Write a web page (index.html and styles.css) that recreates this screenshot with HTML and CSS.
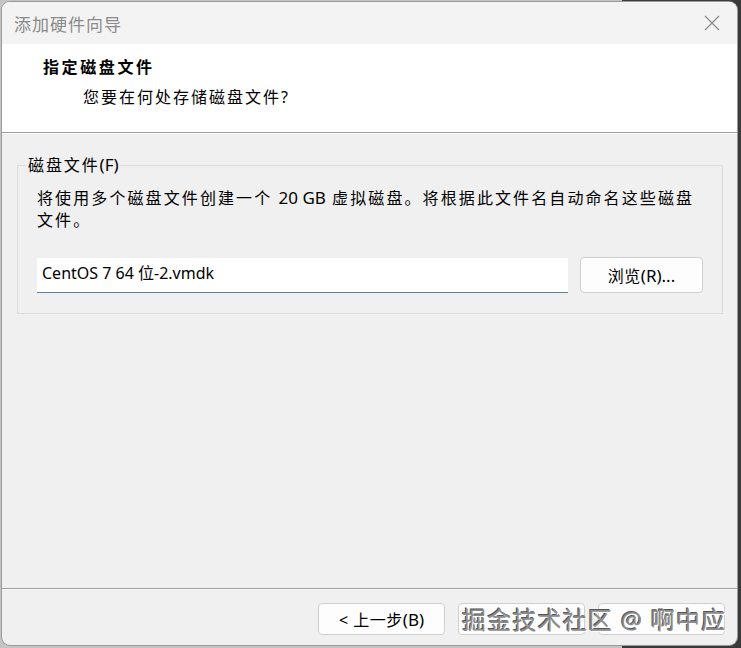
FILE: index.html
```html
<!DOCTYPE html>
<html lang="zh-CN">
<head>
	<meta charset="UTF-8">
	<title>添加硬件向导</title>
	<link rel="stylesheet" href="styles.css">
</head>
<body>
	<div class="dlg">
		<div class="titlebar">
			<span class="title">添加硬件向导</span>
			<svg class="close" width="16" height="16" viewBox="0 0 16 16"><path d="M1 1L15 15M15 1L1 15" stroke="#8a8a8a" stroke-width="1.2" fill="none"/></svg>
		</div>
		<div class="head">
			<p class="h1">指定磁盘文件</p>
			<p class="h2">您要在何处存储磁盘文件?</p>
		</div>
		<div class="main">
			<fieldset class="grp">
				<legend>磁盘文件<span class="lat">(F)</span></legend>
				<p class="desc">将使用多个磁盘文件创建一个 <span class="lat">20 GB</span> 虚拟磁盘。将根据此文件名自动命名这些磁盘文件。</p>
				<div class="row">
					<div class="inp">CentOS 7 64 位-2.vmdk</div>
					<div class="btn browse">浏览<span class="lat">(R)...</span></div>
				</div>
			</fieldset>
		</div>
		<div class="foot">
			<div class="btn">&lt; 上一步<span class="lat">(B)</span></div>
			<div class="btn"></div>
			<div class="btn"></div>
			<span class="mark">掘金技术社区 @ 啊中应</span>
		</div>
	</div>
</body>
</html>
```

FILE: styles.css
```css
html,body,p{margin:0;padding:0;}
body{height:648px;overflow:hidden;background:linear-gradient(to right,#c4c4c4 84%,#3a3a3a 84%);font-family:"Noto Sans","Noto Sans CJK SC",sans-serif;}
.dlg{position:relative;margin:2px 4px 0 2px;height:643px;border-radius:8px;background:#f0f0f0;overflow:hidden;display:flex;flex-direction:column;box-shadow:0 0 0 1px #9a9a9a;}
.titlebar{height:42px;background:#f3f3f3;display:flex;align-items:center;justify-content:space-between;padding:0 17px 0 12px;}
.title{font-size:17px;color:#8a8a8a;letter-spacing:1px;}
.close{display:block;}
.head{height:89px;background:#fff;border-bottom:1px solid #a0a0a0;padding:12px 0 0 41px;box-sizing:border-box;}
.h1{font-size:16px;font-weight:bold;letter-spacing:2.6px;color:#000;line-height:22px;}
.h2{font-size:16px;letter-spacing:2px;color:#000;line-height:22px;margin:8px 0 0 40px;}
.main{flex:1;border-top:1px solid #fff;padding:21px 14px 0 15px;}
.grp{margin:0;border:1px solid #dcdcdc;padding:0 18px 21px 19px;height:159px;box-sizing:border-box;}
.grp legend{font-size:16px;letter-spacing:1.9px;color:#000;padding:0 1px;margin-left:-10px;line-height:20px;}
.desc{font-size:16px;letter-spacing:2.1px;color:#000;line-height:22px;margin-top:12px;}
.lat{font-size:17px;letter-spacing:0;}
.row{display:flex;align-items:center;margin-top:26px;}
.inp{width:531px;height:35px;box-sizing:border-box;background:#fff;border-bottom:1px solid #5c7f9f;font-size:16px;line-height:26px;padding:2px 5px;color:#000;}
.btn{width:127px;height:32px;box-sizing:border-box;background:#fdfdfd;border:1px solid #d0d0d0;border-radius:4px;font-size:16px;display:flex;align-items:center;justify-content:center;color:#000;letter-spacing:0.5px;}
.browse{width:123px;height:36px;margin-left:12px;}
.foot{position:relative;height:57px;border-top:1px solid #a0a0a0;box-shadow:inset 0 1px 0 #fafafa;display:flex;justify-content:flex-end;gap:13px;padding:14px 12px 0 0;box-sizing:border-box;}
.mark{position:absolute;left:460px;top:12px;font-size:24px;color:#8c8c8c;letter-spacing:1.2px;text-shadow:1px 1px 0 #fff,-1px -1px 0 #555;white-space:nowrap;}
```
